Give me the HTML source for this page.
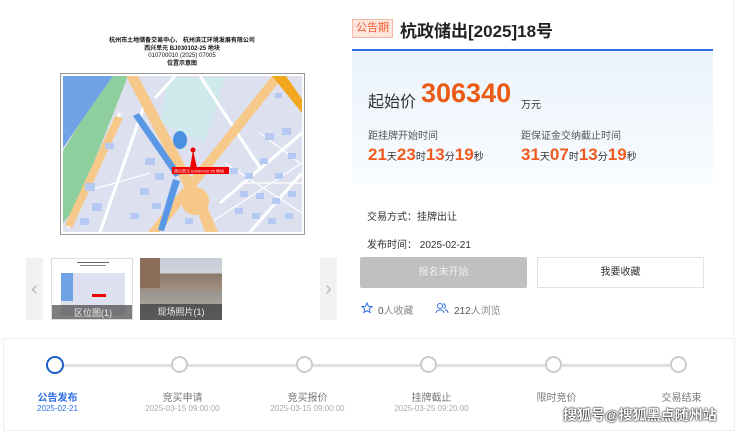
<!DOCTYPE html>
<html><head><meta charset="utf-8"><style>
*{margin:0;padding:0;box-sizing:border-box}
body{width:740px;height:434px;background:#fff;font-family:"Liberation Sans","Noto Sans CJK SC",sans-serif;position:relative;overflow:hidden;color:#333}
.a{position:absolute}
</style></head><body>
<div class="a" style="left:733px;top:0;width:1px;height:336px;background:#eee"></div>
<div class="a" style="left:60px;top:38px;width:244px;text-align:center;font-size:6px;line-height:7.5px;color:#111;font-weight:bold">杭州市土地储备交易中心、 杭州滨江环境发展有限公司<br>西兴单元 BJ030102-25 地块<br><span style="font-weight:normal">010700010 (2025) 07005</span><br>位置示意图</div>
<svg class="a" style="left:60px;top:73px" width="245" height="162" viewBox="0 0 245 162">
<rect x="0.5" y="0.5" width="244" height="161" fill="#fff" stroke="#999"/>
<rect x="3" y="3" width="239" height="156" fill="#dde0ee"/>
<path d="M3 3 L53 3 L20 50 L3 75Z" fill="#6fa3e6"/>
<path d="M53 3 L68 3 L16 135 L3 150 L3 78 L20 50Z" fill="#8fcf9e"/>
<polygon points="108,5 165,5 145,70 100,50" fill="#cfe9ec"/>
<g stroke="#fff" stroke-width="3" fill="none"><path d="M60 40 L8 155"/><path d="M85 30 L40 159"/><path d="M140 3 L200 95"/><path d="M242 100 L190 159"/><path d="M160 130 L242 60"/><path d="M95 25 L115 3"/></g>
<g stroke="#fff" stroke-width="1.2" fill="none"><path d="M180 110 L242 110"/><path d="M165 90 L242 140"/><path d="M20 120 L90 100"/><path d="M200 60 L240 90"/><path d="M150 150 L242 90"/></g>
<path d="M66 3 L78 3 L150 140 L158 159 L145 159 L138 140Z" fill="#f6c98a"/>
<path d="M212 3 L224 3 L100 159 L88 159Z" fill="#f6c98a"/>
<path d="M55 43 L63 45 L12 155 L5 152Z" fill="#f6c98a"/>
<circle cx="135" cy="128" r="14" fill="#f6c98a"/>
<path d="M212 3 L226 3 L242 26 L242 40Z" fill="#f2a81e"/>
<path d="M73 43 L79 40 L121 101 L115 104Z" fill="#5a98e6"/>
<path d="M113 106 L120 108 L104 158 L98 157Z" fill="#5a98e6"/>
<ellipse cx="120" cy="67" rx="7" ry="9" fill="#4a8fe0"/>
<g fill="#b5c9f3"><rect x="85" y="85" width="10" height="7"/><rect x="95" y="100" width="9" height="7"/><rect x="80" y="115" width="9" height="7"/><rect x="92" y="130" width="9" height="6"/><rect x="70" y="140" width="9" height="6"/><rect x="25" y="110" width="10" height="8"/><rect x="32" y="130" width="10" height="8"/><rect x="20" y="145" width="9" height="7"/><rect x="45" y="70" width="9" height="6"/><rect x="170" y="95" width="8" height="6"/><rect x="185" y="100" width="8" height="6"/><rect x="200" y="85" width="8" height="6"/><rect x="215" y="100" width="8" height="6"/><rect x="228" y="80" width="8" height="6"/><rect x="180" y="118" width="8" height="6"/><rect x="196" y="120" width="8" height="6"/><rect x="212" y="125" width="8" height="6"/><rect x="228" y="118" width="8" height="6"/><rect x="175" y="135" width="8" height="6"/><rect x="192" y="140" width="8" height="6"/><rect x="208" y="145" width="8" height="6"/><rect x="225" y="140" width="8" height="6"/><rect x="205" y="60" width="9" height="7"/><rect x="222" y="55" width="9" height="7"/><rect x="125" y="145" width="8" height="6"/><rect x="215" y="20" width="7" height="5"/></g>
<circle cx="133" cy="77" r="2.5" fill="#e00"/>
<path d="M133 77 L130 95 L137 95Z" fill="#e00"/>
<rect x="112" y="94" width="57" height="7" fill="#e00"/>
<text x="114" y="99.5" font-size="4" fill="#fff">西兴单元 BJ030102-25 地块</text>
</svg>
<!-- thumbnails -->
<div class="a" style="left:26px;top:258px;width:17px;height:62px;background:#f2f2f2;color:#bbb;font-size:20px;line-height:62px;text-align:center">‹</div>
<div class="a" style="left:320px;top:258px;width:17px;height:62px;background:#f2f2f2;color:#bbb;font-size:20px;line-height:62px;text-align:center">›</div>
<div class="a" style="left:51px;top:258px;width:82px;height:62px;background:#fff;border:1px solid #ddd;overflow:hidden">
 <div class="a" style="left:25px;top:3px;width:32px;height:1px;background:#666"></div>
 <div class="a" style="left:28px;top:6px;width:26px;height:1px;background:#888"></div>
 <div class="a" style="left:9px;top:14px;width:64px;height:42px;background:#dde0ee"></div>
 <div class="a" style="left:9px;top:14px;width:12px;height:28px;background:#6fa3e6"></div>
 <div class="a" style="left:40px;top:35px;width:14px;height:3px;background:#e00"></div>
 <div class="a" style="left:0;top:46px;width:82px;height:16px;background:rgba(80,80,80,.75);color:#eee;font-size:9px;text-align:center;line-height:16px">区位图(1)</div>
</div>
<div class="a" style="left:140px;top:258px;width:82px;height:62px;overflow:hidden;background:linear-gradient(#c7cbd6 0,#d0d3db 25%,#8a7868 25%,#a09080 50%,#9a948e 55%,#b5b0aa 100%)">
 <div class="a" style="left:0;top:0;width:20px;height:30px;background:#8a6e5a"></div>
 <div class="a" style="left:0;top:46px;width:82px;height:16px;background:rgba(60,60,60,.75);color:#eee;font-size:9px;text-align:center;line-height:16px">现场照片(1)</div>
</div>
<!-- right -->
<div class="a" style="left:352px;top:19px;width:41px;height:19px;background:#fde6de;border:1px solid #f7b9a5;color:#f05a2a;font-size:11px;line-height:17px;text-align:center">公告期</div>
<div class="a" style="left:400px;top:17px;font-size:17px;font-weight:bold;color:#222">杭政储出[2025]18号</div>
<div class="a" style="left:352px;top:49px;width:361px;height:135px;border-top:2px solid #2e6ee0;background:linear-gradient(#eaf3fb,#fafcff)"></div>
<div class="a" style="left:368px;top:88px;font-size:16px;color:#333">起始价</div>
<div class="a" style="left:421px;top:78px;font-size:27px;font-weight:bold;color:#ea5a14">306340</div>
<div class="a" style="left:521px;top:96px;font-size:10px;color:#333">万元</div>
<div class="a" style="left:368px;top:127px;font-size:10px;color:#555">距挂牌开始时间</div>
<div class="a" style="left:521px;top:127px;font-size:10px;color:#555">距保证金交纳截止时间</div>
<div class="a" style="left:368px;top:145px;font-size:17px;font-weight:bold;color:#f05a1e;white-space:nowrap">21<small style="font-size:10px;font-weight:normal;color:#333">天</small>23<small style="font-size:10px;font-weight:normal;color:#333">时</small>13<small style="font-size:10px;font-weight:normal;color:#333">分</small>19<small style="font-size:10px;font-weight:normal;color:#333">秒</small></div>
<div class="a" style="left:521px;top:145px;font-size:17px;font-weight:bold;color:#f05a1e;white-space:nowrap">31<small style="font-size:10px;font-weight:normal;color:#333">天</small>07<small style="font-size:10px;font-weight:normal;color:#333">时</small>13<small style="font-size:10px;font-weight:normal;color:#333">分</small>19<small style="font-size:10px;font-weight:normal;color:#333">秒</small></div>
<div class="a" style="left:367px;top:208px;font-size:10px;color:#333">交易方式：挂牌出让</div>
<div class="a" style="left:367px;top:236px;font-size:10px;color:#333">发布时间： 2025-02-21</div>
<div class="a" style="left:360px;top:257px;width:167px;height:31px;background:#c0c0c0;border-radius:2px;color:#eee;font-size:10px;text-align:center;line-height:31px">报名未开始</div>
<div class="a" style="left:537px;top:257px;width:167px;height:31px;background:#fff;border:1px solid #e2e2e2;color:#333;font-size:10px;text-align:center;line-height:30px">我要收藏</div>
<svg class="a" style="left:361px;top:302px" width="12" height="12" viewBox="0 0 12 12"><path d="M6 1 L7.5 4.3 L11 4.6 L8.3 7 L9.1 10.5 L6 8.7 L2.9 10.5 L3.7 7 L1 4.6 L4.5 4.3Z" fill="none" stroke="#2e6ee0" stroke-width="1"/></svg>
<div class="a" style="left:378px;top:302px;font-size:10px;color:#555">0<span style="color:#888">人收藏</span></div>
<svg class="a" style="left:435px;top:302px" width="14" height="12" viewBox="0 0 14 12"><circle cx="5" cy="4" r="2.5" fill="none" stroke="#2e6ee0"/><path d="M1 11 C1 7 9 7 9 11" fill="none" stroke="#2e6ee0"/><path d="M8 1.8 A2.5 2.5 0 0 1 9 6.5 M10 7.5 C12 8 13 9 13 11" fill="none" stroke="#2e6ee0"/></svg>
<div class="a" style="left:454px;top:302px;font-size:10px;color:#555">212<span style="color:#888">人浏览</span></div>
<!-- timeline -->
<div class="a" style="left:3px;top:338px;width:732px;height:93px;border:1px solid #eee"></div>
<div class="a" style="left:55px;top:364px;width:624px;height:3px;background:#e0e0e0"></div>
<div class="a" style="left:46px;top:356px;width:18px;height:18px;border-radius:50%;border:2px solid #1d5ec9;background:#fff"></div>
<div class="a" style="left:171px;top:356px;width:17px;height:17px;border-radius:50%;border:2px solid #ccc;background:#fff"></div>
<div class="a" style="left:296px;top:356px;width:17px;height:17px;border-radius:50%;border:2px solid #ccc;background:#fff"></div>
<div class="a" style="left:420px;top:356px;width:17px;height:17px;border-radius:50%;border:2px solid #ccc;background:#fff"></div>
<div class="a" style="left:545px;top:356px;width:17px;height:17px;border-radius:50%;border:2px solid #ccc;background:#fff"></div>
<div class="a" style="left:670px;top:356px;width:17px;height:17px;border-radius:50%;border:2px solid #ccc;background:#fff"></div>
<div class="a" style="left:5px;top:389px;width:105px;text-align:center;font-size:10px;font-weight:bold;color:#2e6ee0">公告发布</div>
<div class="a" style="left:5px;top:404px;width:105px;text-align:center;font-size:8px;color:#2e6ee0">2025-02-21</div>
<div class="a" style="left:130px;top:389px;width:105px;text-align:center;font-size:10px;color:#777">竞买申请</div>
<div class="a" style="left:130px;top:404px;width:105px;text-align:center;font-size:8px;color:#aaa">2025-03-15 09:00:00</div>
<div class="a" style="left:255px;top:389px;width:105px;text-align:center;font-size:10px;color:#777">竞买报价</div>
<div class="a" style="left:255px;top:404px;width:105px;text-align:center;font-size:8px;color:#aaa">2025-03-15 09:00:00</div>
<div class="a" style="left:379px;top:389px;width:105px;text-align:center;font-size:10px;color:#777">挂牌截止</div>
<div class="a" style="left:379px;top:404px;width:105px;text-align:center;font-size:8px;color:#aaa">2025-03-25 09:20:00</div>
<div class="a" style="left:504px;top:389px;width:105px;text-align:center;font-size:10px;color:#777">限时竞价</div>
<div class="a" style="left:629px;top:389px;width:105px;text-align:center;font-size:10px;color:#777">交易结束</div>
<div class="a" style="left:563px;top:405px;font-size:14px;font-weight:bold;color:#fff;text-shadow:0 0 2px #000,0 0 1px #000">搜狐号@搜狐黑点随州站</div>
</body></html>
